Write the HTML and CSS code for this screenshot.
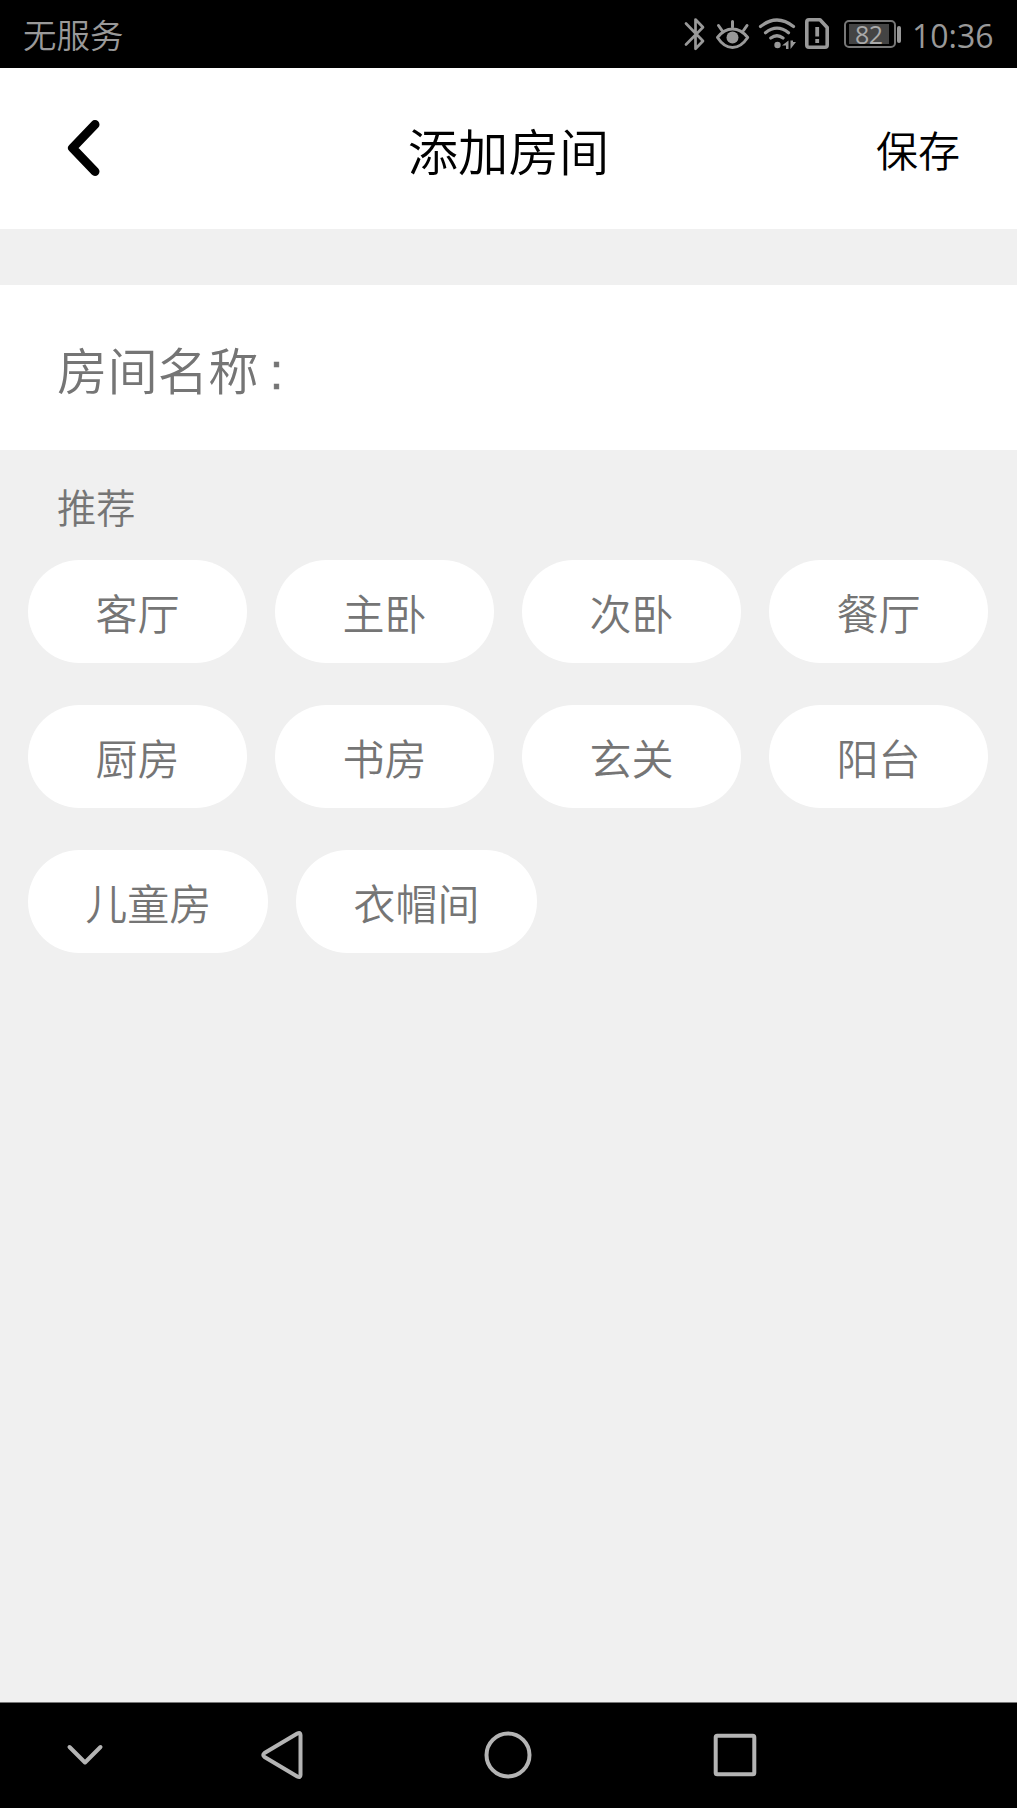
FILE: index.html
```html
<!DOCTYPE html>
<html lang="zh-CN">
<head>
<meta charset="utf-8">
<title>添加房间</title>
<link rel="stylesheet" href="styles.css">
</head>
<body>
<div class="status-bar">
  <span class="carrier">无服务</span>
  <svg class="status-icons" width="146" height="36" viewBox="683 16 146 36" fill="none" stroke="#999" stroke-width="2.7" stroke-linecap="round" stroke-linejoin="round">
    <path d="M686 23.5 703 41 695.5 48.8V19.5L703 27.3 686 44.5"/>
    <g>
      <path stroke-width="3" d="M717.5 37.5Q724 29 732.5 29T747.7 37.5Q741 47.5 732.5 47.5T717.5 37.5ZM732.5 21.5V27M718.5 25.5 722 30.5M747 25.500 743.500 30.500"/>
      <circle cx="732.5" cy="37.5" r="6" fill="#999" stroke="none"/>
    </g>
    <g stroke-width="3.2">
      <path d="M760.5 26.500Q777 13.500 793.500 26.500M765.500 32.700Q777 23.500 788.500 32.700M770.800 38Q777 33.500 783 38"/>
      <circle cx="777.5" cy="45" r="3.2" fill="#999" stroke="none"/>
      <path fill="#999" stroke="none" d="M788.5 40.500V49H786V45.500H782ZM790.500 40.500V49L796 42H793V40.500Z"/>
    </g>
    <path stroke-width="3.6" d="M809 19.700H820L827.200 27.500V45Q827.200 47.300 825 47.300H809Q806.800 47.300 806.800 45V22Q806.800 19.700 809 19.700Z"/>
    <path stroke-width="3.8" stroke-linecap="butt" d="M817.2 27V36.500M817.200 39V43"/>
  </svg>
  <span class="battery"><span class="battery-level">82</span></span>
  <span class="battery-tip"></span>
  <span class="clock">10:36</span>
</div>
<header class="header">
  <svg class="back" width="36" height="60" viewBox="0 0 36 60"><path d="M30 6.500 7.500 30 30 53.500" fill="none" stroke="#000" stroke-width="9" stroke-linecap="round" stroke-linejoin="round"/></svg>
  <h1 class="title">添加房间</h1>
  <span class="save">保存</span>
</header>
<main class="content">
  <div class="name-row"><span>房间名称</span><span class="colon">:</span></div>
  <h2 class="section-title">推荐</h2>
  <div class="chips">
    <span class="chip">客厅</span>
    <span class="chip">主卧</span>
    <span class="chip">次卧</span>
    <span class="chip">餐厅</span>
    <span class="chip">厨房</span>
    <span class="chip">书房</span>
    <span class="chip">玄关</span>
    <span class="chip">阳台</span>
    <span class="chip">儿童房</span>
    <span class="chip">衣帽间</span>
  </div>
</main>
<nav class="nav-bar">
  <svg class="nav-hide" width="50" height="50" viewBox="0 0 50 50"><path d="M9.500 17 25 32.500 40.500 17"/></svg>
  <svg class="nav-back" width="50" height="50" viewBox="0 0 50 50"><path d="M42.300 3.500Q45.500 2 45.500 5V45Q45.500 48 42.300 46.500L9.500 27Q7 25 9.500 23Z"/></svg>
  <svg class="nav-home" width="50" height="50" viewBox="0 0 50 50"><circle cx="25" cy="25" r="21.500"/></svg>
  <svg class="nav-recent" width="50" height="50" viewBox="0 0 50 50"><rect x="5.700" y="5.700" width="38.600" height="38.600" rx="1.500"/></svg>
</nav>
</body>
</html>
```
FILE: styles.css
```css
* {
  box-sizing: border-box;
}

body {
  margin: 0;
  height: 1808px;
  display: flex;
  flex-direction: column;
  background: #f0f0f0;
  color: #757575;
  font-family: "Noto Sans CJK SC", sans-serif;
  font-weight: 350;
  overflow: hidden;
}

.status-bar {
  height: 68px;
  flex: none;
  display: flex;
  align-items: center;
  padding-left: 23px;
  background: #000;
  color: #999;
}

.carrier {
  font-size: 33.5px;
  line-height: 68px;
}

.status-icons {
  margin-left: auto;
}

.battery {
  width: 52px;
  height: 28px;
  margin-left: 15px;
  padding: 2px;
  border: 2px solid #777;
  border-radius: 5px;
}

.battery-level {
  display: block;
  width: 40px;
  height: 20px;
  margin-left: 1px;
  padding-left: 6px;
  background: #444;
  color: #aaa;
  font: 25px/20px "Open Sans", sans-serif;
  letter-spacing: -0.5px;
}

.battery-tip {
  width: 4px;
  height: 17px;
  margin-left: 1px;
  border-radius: 2px;
  background: #999;
}

.clock {
  width: 105px;
  margin-left: 11px;
  padding-top: 3px;
  font: 32px/65px "Open Sans", sans-serif;
}

.header {
  height: 161px;
  flex: none;
  display: grid;
  grid-template-columns: 292px 1fr 300px;
  align-items: center;
  padding: 0 57px 0 65px;
  background: #fff;
  color: #000;
}

.back {
  margin-bottom: 2px;
}

.title {
  margin: 0;
  padding-top: 3px;
  text-align: center;
  font-size: 50.4px;
  font-weight: 350;
  line-height: 70px;
}

.save {
  text-align: right;
  font-size: 42px;
  line-height: 60px;
}

.content {
  flex: 1;
  padding-top: 56px;
}

.name-row {
  height: 165px;
  display: flex;
  align-items: center;
  padding: 2px 57px 0;
  background: #fff;
  font-size: 50.4px;
}

.colon {
  padding: 6px 0 0 11px;
  font-family: "Liberation Sans", sans-serif;
  -webkit-text-stroke: 0.5px #757575;
}

.section-title {
  margin: 0;
  padding: 27px 57px 0;
  height: 110px;
  font-size: 39.3px;
  font-weight: 350;
  line-height: 58px;
}

.chips {
  display: flex;
  flex-wrap: wrap;
  gap: 42px 28px;
  padding: 0 26px 0 28px;
}

.chip {
  min-width: 219px;
  height: 103px;
  padding: 2px 57.200px 0;
  border-radius: 52px;
  background: #fff;
  text-align: center;
  font-size: 42px;
  line-height: 100px;
}

.nav-bar {
  height: 106px;
  flex: none;
  display: flex;
  align-items: center;
  padding: 0 0 2px 59.5px;
  border-top: 1px solid #777;
  background: #000;
  fill: none;
  stroke: #b4b4b4;
  stroke-width: 4;
  stroke-linecap: round;
  stroke-linejoin: round;
}

.nav-back {
  margin-left: 145.5px;
}

.nav-home {
  margin-left: 178px;
}

.nav-recent {
  margin-left: 176.5px;
}
```
